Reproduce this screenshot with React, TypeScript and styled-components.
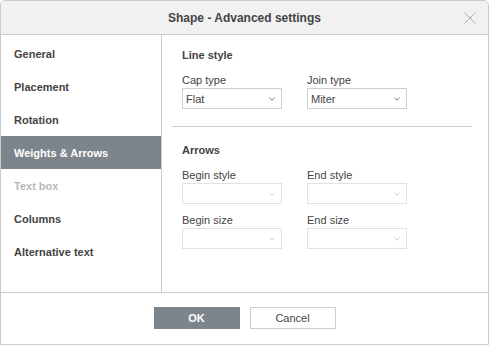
import * as React from 'react';
import styled, { createGlobalStyle, css } from 'styled-components';

const GlobalStyle = createGlobalStyle`
  html, body {
    margin: 0;
    padding: 0;
    background: #ffffff;
  }
  body {
    font-family: Arial, 'Liberation Sans', Helvetica, sans-serif;
    font-size: 11px;
    color: #444444;
  }
`;

const Dialog = styled.div`
  box-sizing: border-box;
  width: 489px;
  height: 345px;
  border: 1px solid #cbcbcb;
  border-radius: 5px 5px 0 0;
  display: flex;
  flex-direction: column;
  background: #ffffff;
  overflow: hidden;
`;

const Header = styled.div`
  position: relative;
  height: 33px;
  flex: none;
  background: #f1f1f1;
  border-bottom: 1px solid #cbcbcb;
  display: flex;
  align-items: center;
  justify-content: center;
  font-size: 12px;
  font-weight: bold;
  color: #444444;
`;

const CloseButton = styled.button`
  position: absolute;
  right: 12px;
  top: 11px;
  width: 12px;
  height: 12px;
  padding: 0;
  border: none;
  background: none;
  display: flex;
  align-items: center;
  justify-content: center;
`;

const Body = styled.div`
  flex: 1;
  display: flex;
  min-height: 0;
`;

const Sidebar = styled.div`
  width: 160px;
  flex: none;
  border-right: 1px solid #cbcbcb;
  padding-top: 2px;
  display: flex;
  flex-direction: column;
`;

const MenuItem = styled.div<{ $active?: boolean; $disabled?: boolean }>`
  height: 33px;
  display: flex;
  align-items: center;
  padding-left: 13px;
  font-weight: bold;
  font-size: 11px;
  color: #444444;
  ${({ $active }) =>
    $active &&
    css`
      background: #7d858c;
      color: #ffffff;
    `}
  ${({ $disabled }) =>
    $disabled &&
    css`
      color: #bababa;
    `}
`;

const Content = styled.div`
  flex: 1;
  padding: 13px 16px 0 20px;
`;

const SectionTitle = styled.div`
  font-weight: bold;
  line-height: 14px;
  margin-bottom: 11px;
`;

const Grid = styled.div`
  display: grid;
  grid-template-columns: 100px 100px;
  column-gap: 25px;
  row-gap: 9px;
`;

const Field = styled.div`
  display: flex;
  flex-direction: column;
`;

const Label = styled.div`
  line-height: 14px;
  margin-bottom: 1px;
`;

const SelectBox = styled.div<{ $disabled?: boolean }>`
  box-sizing: border-box;
  height: 21px;
  border: 1px solid ${({ $disabled }) => ($disabled ? '#e1e1e1' : '#cfcfcf')};
  display: flex;
  align-items: center;
  justify-content: space-between;
  padding: 0 6px 0 3px;
  background: #ffffff;
  color: #444444;
`;

const Separator = styled.div`
  height: 1px;
  background: #cbcbcb;
  margin: 17px 0 16px -10px;
  width: 300px;
`;

const Footer = styled.div`
  flex: none;
  height: 52px;
  border-top: 1px solid #cbcbcb;
  display: flex;
  justify-content: center;
  gap: 10px;
  padding-top: 14px;
  box-sizing: border-box;
`;

const Button = styled.button<{ $primary?: boolean }>`
  box-sizing: border-box;
  width: 86px;
  height: 22px;
  font-family: inherit;
  font-size: 11px;
  padding: 0;
  cursor: pointer;
  ${({ $primary }) =>
    $primary
      ? css`
          background: #7d858c;
          border: 1px solid #7d858c;
          color: #ffffff;
          font-weight: bold;
        `
      : css`
          background: #ffffff;
          border: 1px solid #cfcfcf;
          color: #444444;
        `}
`;

function Chevron({ disabled }: { disabled?: boolean }) {
  return (
    <svg width="6" height="4" viewBox="0 0 6 4">
      <path
        d="M0.5 0.8 L3 3.2 L5.5 0.8"
        fill="none"
        stroke={disabled ? '#cccccc' : '#7a7a7a'}
        strokeWidth="1"
      />
    </svg>
  );
}

function Select({ value, disabled }: { value?: string; disabled?: boolean }) {
  return (
    <SelectBox $disabled={disabled}>
      <span>{value}</span>
      <Chevron disabled={disabled} />
    </SelectBox>
  );
}

const menu = [
  { label: 'General' },
  { label: 'Placement' },
  { label: 'Rotation' },
  { label: 'Weights & Arrows', active: true },
  { label: 'Text box', disabled: true },
  { label: 'Columns' },
  { label: 'Alternative text' },
];

export default function App() {
  return (
    <>
      <GlobalStyle />
      <Dialog>
        <Header>
          Shape - Advanced settings
          <CloseButton>
            <svg width="12" height="12" viewBox="0 0 12 12">
              <path d="M0.5 0.5 L11.5 11.5 M11.5 0.5 L0.5 11.5" stroke="#ababab" strokeWidth="1" />
            </svg>
          </CloseButton>
        </Header>
        <Body>
          <Sidebar>
            {menu.map((m) => (
              <MenuItem key={m.label} $active={m.active} $disabled={m.disabled}>
                {m.label}
              </MenuItem>
            ))}
          </Sidebar>
          <Content>
            <SectionTitle>Line style</SectionTitle>
            <Grid>
              <Field>
                <Label>Cap type</Label>
                <Select value="Flat" />
              </Field>
              <Field>
                <Label>Join type</Label>
                <Select value="Miter" />
              </Field>
            </Grid>
            <Separator />
            <SectionTitle>Arrows</SectionTitle>
            <Grid>
              <Field>
                <Label>Begin style</Label>
                <Select disabled />
              </Field>
              <Field>
                <Label>End style</Label>
                <Select disabled />
              </Field>
              <Field>
                <Label>Begin size</Label>
                <Select disabled />
              </Field>
              <Field>
                <Label>End size</Label>
                <Select disabled />
              </Field>
            </Grid>
          </Content>
        </Body>
        <Footer>
          <Button $primary>OK</Button>
          <Button>Cancel</Button>
        </Footer>
      </Dialog>
    </>
  );
}
